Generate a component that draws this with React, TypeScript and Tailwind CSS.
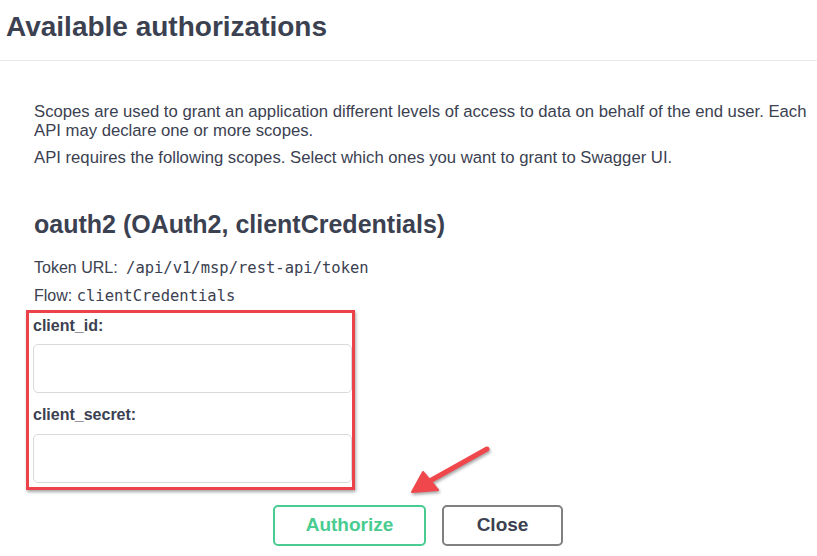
import React from "react";

const Arrow = () => (
  <svg
    className="absolute left-[400px] top-[438px]"
    width="100"
    height="64"
    viewBox="0 0 100 64"
    fill="none"
  >
    <g style={{ filter: "drop-shadow(1px 2px 1.5px rgba(0,0,0,0.35))" }}>
      <line x1="87" y1="11" x2="28" y2="44" stroke="#f0474c" strokeWidth="5" strokeLinecap="round" />
      <polygon points="12,54 23,34 38,52" fill="#f0474c" stroke="#f0474c" strokeWidth="2" strokeLinejoin="round" />
    </g>
  </svg>
);

const Field = ({ label, top }: { label: string; top: string }) => (
  <div className={top}>
    <label className="block text-[16px] leading-[19px] font-bold">{label}</label>
    <input
      type="text"
      className="mt-[9.5px] block w-full h-[49px] rounded-[5px] border border-[#d9d9d9] bg-white"
    />
  </div>
);

export default function App() {
  return (
    <div className="relative w-[817px] h-[556px] overflow-hidden bg-white text-[#3b4151] font-['Liberation_Sans',Arial,sans-serif]">
      <div className="h-[61px] pt-[13px] pl-[6px] border-b border-[#e8e8e8]">
        <h2 className="text-[28px] leading-[28px] font-bold">Available authorizations</h2>
      </div>

      <div className="pl-[34px]">
        <p className="mt-[41px] w-[776px] text-[16.7px] leading-[19px]">
          Scopes are used to grant an application different levels of access to data on behalf of the end user. Each
          API may declare one or more scopes.
        </p>
        <p className="mt-[8px] text-[16.7px] leading-[19px]">
          API requires the following scopes. Select which ones you want to grant to Swagger UI.
        </p>

        <h4 className="mt-[42px] text-[25px] leading-[30px] font-bold">oauth2 (OAuth2, clientCredentials)</h4>

        <p className="mt-[15px] text-[16px] leading-[27px]">
          Token URL:{" "}
          <code className="ml-[4px] font-['DejaVu_Sans_Mono',monospace] text-[15.5px]">/api/v1/msp/rest-api/token</code>
        </p>
        <p className="text-[16px] leading-[27px]">
          Flow: <code className="font-['DejaVu_Sans_Mono',monospace] text-[15.5px]">clientCredentials</code>
        </p>

        <div className="-ml-[8px] w-[329px] border-[3px] border-[#ec4249] pl-[4px] pt-[2.5px] pb-[4px] shadow-[1px_2px_3px_rgba(0,0,0,0.35)]">
          <Field label="client_id:" top="" />
          <Field label="client_secret:" top="mt-[12px]" />
        </div>
      </div>

      <div className="mt-[15px] flex gap-[16px] pl-[273px]">
        <button className="w-[153px] h-[41px] rounded-[5px] border-2 border-[#49cc90] text-[19px] font-bold text-[#49cc90]">
          Authorize
        </button>
        <button className="w-[121px] h-[41px] rounded-[5px] border-2 border-[#808080] text-[19px] font-bold text-[#3b4151]">
          Close
        </button>
      </div>

      <Arrow />
    </div>
  );
}
